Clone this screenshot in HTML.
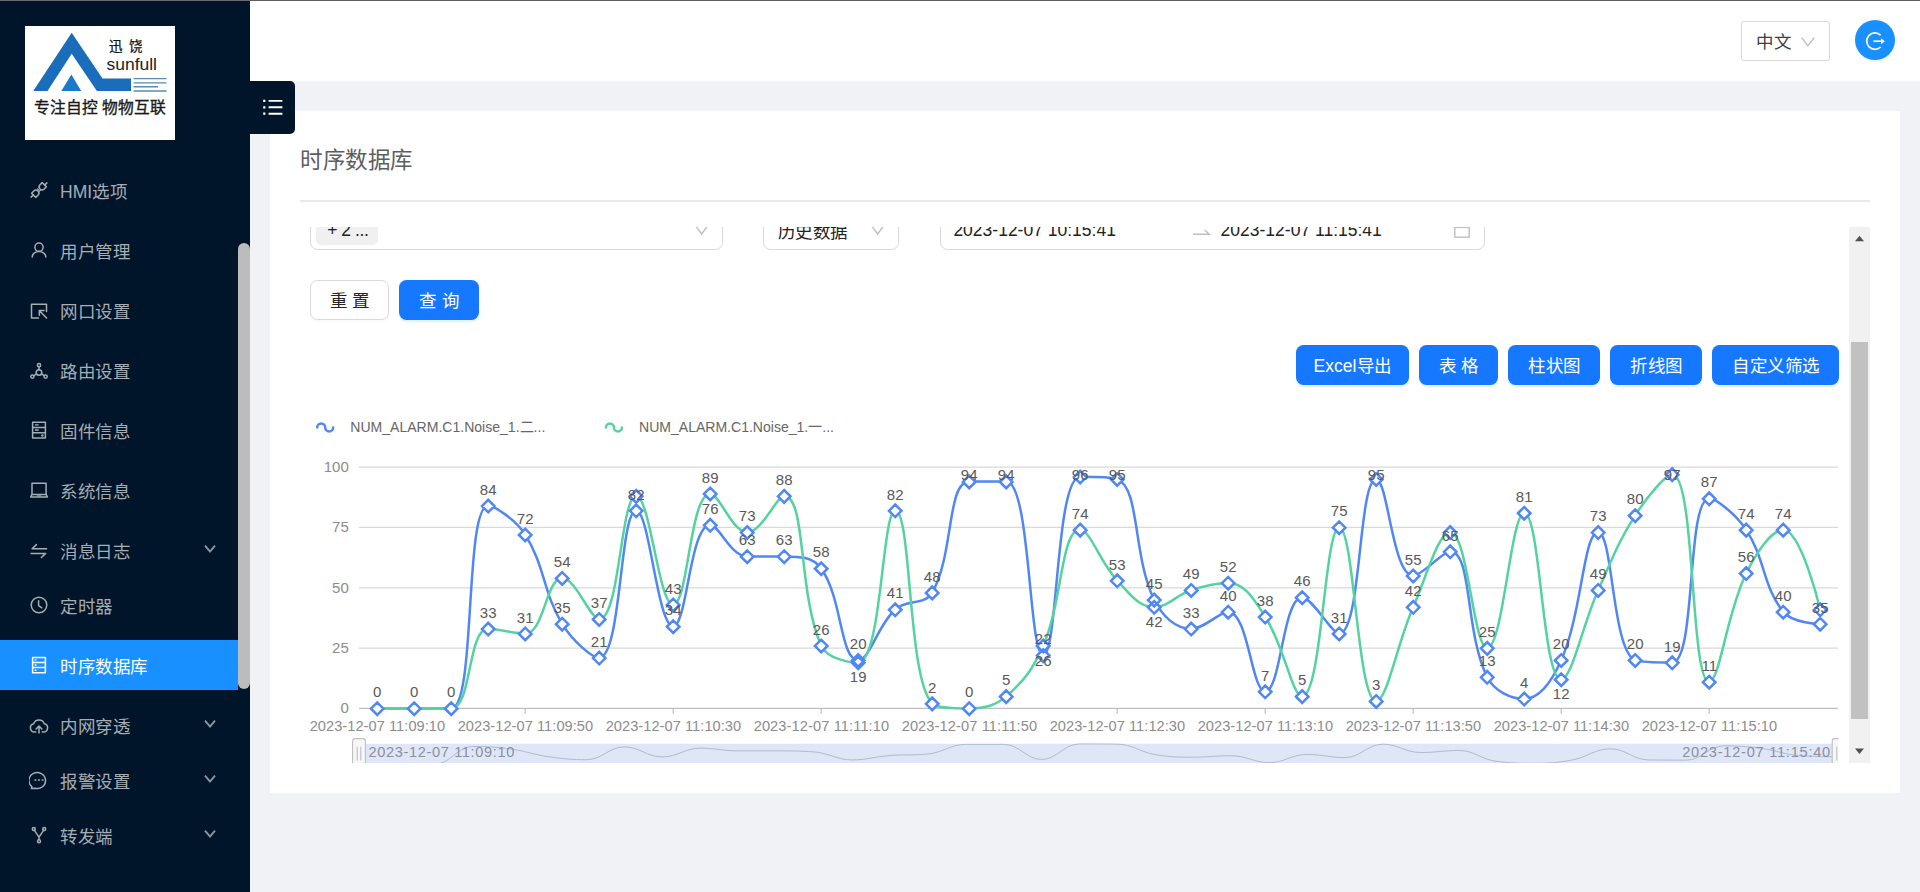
<!DOCTYPE html>
<html lang="zh-CN">
<head>
<meta charset="utf-8">
<title>时序数据库</title>
<style>
*{box-sizing:border-box}
html,body{margin:0;padding:0}
body{width:1920px;height:892px;overflow:hidden;background:#f0f2f5;position:relative;font-family:"Liberation Sans",sans-serif;font-size:17.5px;color:#262626}
svg text{font-family:"Liberation Sans",sans-serif}
.abs{position:absolute}
.c{display:inline-block;width:1em;text-align:center;font-style:normal}
.topline{left:0;top:0;width:1920px;height:1px;background:#5e5e5e;z-index:9}
.sider{left:0;top:0;width:250px;height:892px;background:#001529}
.header{left:250px;top:0;width:1670px;height:81px;background:#fff}
.mi{left:60px;height:50px;line-height:50px;font-size:17.5px;white-space:nowrap}
.sthumb{left:238px;top:243px;width:12px;height:446px;border-radius:6px;background:#bcbcbc}
.toggle{z-index:5;left:250px;top:81px;width:45px;height:52.5px;background:#001529;border-radius:0 5px 5px 0}
.lang{left:1741px;top:21px;width:89px;height:40px;border:1.25px solid #d9d9d9;border-radius:3px;background:#fff}
.lang span{position:absolute;left:14px;top:2px;line-height:37.5px;font-size:17.5px;color:#404040}
.logout{left:1855px;top:20px;width:40px;height:40px;border-radius:50%;background:#1890ff;box-shadow:0 2px 0 rgba(0,0,0,.045)}
.card{left:270px;top:111px;width:1630px;height:682px;background:#fff}
.title{left:300px;top:142.5px;height:36px;line-height:36px;font-size:22.5px;color:#5e5e5e;white-space:nowrap}
.divider{left:300px;top:200px;width:1570px;height:1.5px;background:#e9e9e9}
.scroll{left:300px;top:227px;width:1570px;height:536px;overflow:hidden}
.scroll .in{position:absolute;left:-300px;top:-227px;width:1920px;height:892px}
.chart{position:absolute;left:300px;top:227px}
.box{border:1.25px solid #d9d9d9;border-radius:7.5px;background:#fff}
.btn{height:40px;border-radius:7.5px;line-height:43.5px;text-align:center;font-size:17.5px;white-space:nowrap}
.btn.p{background:#1677ff;color:#fff;box-shadow:0 2.5px 0 rgba(5,145,255,.1)}
.btn.d{background:#fff;border:1.25px solid #d9d9d9;color:#262626;line-height:41px;box-shadow:0 2.5px 0 rgba(0,0,0,.02)}
.track{left:1849px;top:227px;width:21px;height:536px;background:#f1f1f1}
.thumb{left:1851px;top:342px;width:17px;height:377px;background:#c1c1c1}
.dt{font-size:17.5px;color:#222;line-height:20px;white-space:nowrap}
</style>
</head>
<body>
<div class="abs sider"></div>
<div class="abs header"></div>
<div class="abs topline"></div><div class="abs" style="left:0;top:0;width:250px;height:1px;background:#6a6b70;z-index:10"></div>
<svg class="abs" style="left:25px;top:26px" width="150" height="114" viewBox="25 26 150 114">
<rect x="25" y="26" width="150" height="114" fill="#fff"/>
<path d="M71.7 32.8L33.2 91.1H47.5L71.7 53.8L96.9 91.1H131V78.4H102.5Z" fill="#1a6dba"/>
<path d="M71.4 74.4L61.3 91.1H81.2Z" fill="#1a7ac8"/>
<path d="M133.6 78.6H166.5M133.6 82.9H166.5M133.6 86.8H158M133.6 91H166.5" stroke="#5a8ab3" stroke-width="1.4" fill="none"/>
<text x="108.5" y="50.5" font-family="Liberation Serif, serif" font-size="13.5" fill="#111" stroke="#111" stroke-width="0.25" textLength="33.5" lengthAdjust="spacing">迅饶</text>
<text x="106.5" y="70.3" font-size="17.2" fill="#222" textLength="50.5" lengthAdjust="spacingAndGlyphs">sunfull</text>
<text x="34" y="113.2" font-size="15.8" fill="#1a1a1a" stroke="#1a1a1a" stroke-width="0.35" textLength="132" lengthAdjust="spacing">专注自控 物物互联</text>
</svg>
<svg class="abs" style="left:29.0px;top:180.3px" width="20" height="20" viewBox="-10 -10 20 20"><g fill="none" stroke="#a6adb4" stroke-width="1.5" stroke-linecap="round" stroke-linejoin="round"><path d="M7.9 -7.1L5.6 -4.9M-7.9 7.1L-5.6 4.9"/><path d="M1 -5.2l2.2 -2.2l4.2 4.2l-2.2 2.2a3 3 0 0 1 -4.2 0a3 3 0 0 1 0 -4.2z"/><path d="M-1 5.2l-2.2 2.2l-4.2 -4.2l2.2 -2.2a3 3 0 0 1 4.2 0a3 3 0 0 1 0 4.2z"/><path d="M-1.6 -1.2l1.2 1.2M0.4 1.2l1.2 -1.2" stroke-width="1.2"/></g></svg>
<div class="abs mi" style="top:166.9px;color:#a6adb4">HMI<i class="c">选</i><i class="c">项</i></div>
<svg class="abs" style="left:29.0px;top:240.4px" width="20" height="20" viewBox="-10 -10 20 20"><g fill="none" stroke="#a6adb4" stroke-width="1.5" stroke-linecap="round" stroke-linejoin="round"><circle cx="0" cy="-2.8" r="4.1"/><path d="M-6.8 7a6.8 5.4 0 0 1 13.6 0"/></g></svg>
<div class="abs mi" style="top:227.0px;color:#a6adb4"><i class="c">用</i><i class="c">户</i><i class="c">管</i><i class="c">理</i></div>
<svg class="abs" style="left:29.0px;top:300.5px" width="20" height="20" viewBox="-10 -10 20 20"><g fill="none" stroke="#a6adb4" stroke-width="1.5" stroke-linecap="round" stroke-linejoin="round" stroke-linecap="butt" stroke-linejoin="miter"><path d="M7.5 0.5V-6.8H-7.5V7H-0.5"/><path d="M7.6 7L0.5 -0.2M0.3 4.2V-0.4H5"/></g></svg>
<div class="abs mi" style="top:287.1px;color:#a6adb4"><i class="c">网</i><i class="c">口</i><i class="c">设</i><i class="c">置</i></div>
<svg class="abs" style="left:29.0px;top:360.5px" width="20" height="20" viewBox="-10 -10 20 20"><g fill="none" stroke="#a6adb4" stroke-width="1.5" stroke-linecap="round" stroke-linejoin="round" stroke-width="1.3"><circle cx="0" cy="1.5" r="2.8"/><circle cx="0" cy="-5.8" r="1.6"/><circle cx="-6.6" cy="5.6" r="1.6"/><circle cx="6.6" cy="5.6" r="1.6"/><path d="M0 -4.2V-1.3M-2.4 2.9L-5.2 4.7M2.4 2.9L5.2 4.7"/></g></svg>
<div class="abs mi" style="top:347.1px;color:#a6adb4"><i class="c">路</i><i class="c">由</i><i class="c">设</i><i class="c">置</i></div>
<svg class="abs" style="left:29.0px;top:420.4px" width="20" height="20" viewBox="-10 -10 20 20"><g fill="none" stroke="#a6adb4" stroke-width="1.5" stroke-linecap="round" stroke-linejoin="round" stroke-linejoin="miter"><rect x="-6.4" y="-7.8" width="12.8" height="15.8"/><path d="M-6.4 -2.6H6.4M-6.4 2.7H6.4"/><path d="M-3.6 -5.2H-0.8M-3.6 0H-0.8" stroke-width="1.3"/><circle cx="3.4" cy="5.4" r="0.5" fill="#a6adb4"/></g></svg>
<div class="abs mi" style="top:407.0px;color:#a6adb4"><i class="c">固</i><i class="c">件</i><i class="c">信</i><i class="c">息</i></div>
<svg class="abs" style="left:29.0px;top:480.4px" width="20" height="20" viewBox="-10 -10 20 20"><g fill="none" stroke="#a6adb4" stroke-width="1.5" stroke-linecap="round" stroke-linejoin="round" stroke-linejoin="miter"><rect x="-7" y="-6.8" width="14.1" height="11.2"/><path d="M-7 4.4L-8.3 6.9H8.4L7.1 4.4"/><path d="M-1.6 5.9H1.8" stroke-width="1"/></g></svg>
<div class="abs mi" style="top:467.0px;color:#a6adb4"><i class="c">系</i><i class="c">统</i><i class="c">信</i><i class="c">息</i></div>
<svg class="abs" style="left:29.0px;top:540.6px" width="20" height="20" viewBox="-10 -10 20 20"><g fill="none" stroke="#a6adb4" stroke-width="1.5" stroke-linecap="round" stroke-linejoin="round" stroke-linecap="butt" stroke-linejoin="miter"><path d="M7.6 -2.2H-6.9L-2.6 -6.4"/><path d="M-7.9 2.4H6.7L2.4 6.5"/></g></svg>
<div class="abs mi" style="top:527.2px;color:#a6adb4"><i class="c">消</i><i class="c">息</i><i class="c">日</i><i class="c">志</i></div>
<svg class="abs" style="left:202px;top:543.4px" width="16" height="12" viewBox="-8 -6 16 12"><path d="M-5 -3.3L0 2.6L5 -3.3" fill="none" stroke="#8c96a1" stroke-width="1.9"/></svg>
<svg class="abs" style="left:29.0px;top:595.3px" width="20" height="20" viewBox="-10 -10 20 20"><g fill="none" stroke="#a6adb4" stroke-width="1.5" stroke-linecap="round" stroke-linejoin="round"><circle cx="0" cy="0" r="7.8"/><path d="M-0.4 -4.2V0.6L2.8 2.8"/></g></svg>
<div class="abs mi" style="top:581.9px;color:#a6adb4"><i class="c">定</i><i class="c">时</i><i class="c">器</i></div>
<div class="abs" style="left:0;top:640px;width:238px;height:50px;background:#1890ff"></div>
<svg class="abs" style="left:29.0px;top:655.4px" width="20" height="20" viewBox="-10 -10 20 20"><g fill="none" stroke="#ffffff" stroke-width="1.5" stroke-linecap="round" stroke-linejoin="round" stroke-linejoin="miter"><rect x="-6.4" y="-7.6" width="12.8" height="15.4"/><path d="M-6.4 -2.5H6.4M-6.4 2.6H6.4"/><path d="M-3.8 -5.1h0.8M-3.8 0h0.8M-3.8 5.2h0.8" stroke-width="1.4"/></g></svg>
<div class="abs mi" style="top:642.0px;color:#ffffff"><i class="c">时</i><i class="c">序</i><i class="c">数</i><i class="c">据</i><i class="c">库</i></div>
<svg class="abs" style="left:29.0px;top:715.6px" width="20" height="20" viewBox="-10 -10 20 20"><g fill="none" stroke="#a6adb4" stroke-width="1.5" stroke-linecap="round" stroke-linejoin="round"><path d="M-3.2 6H-4.4a4.2 4.2 0 0 1 -0.9 -8.3a5.6 5.6 0 0 1 10.6 0a4.2 4.2 0 0 1 -0.9 8.3H3.2"/><path d="M0 7V0.4M-2.9 3L0 0.1L2.9 3"/></g></svg>
<div class="abs mi" style="top:702.2px;color:#a6adb4"><i class="c">内</i><i class="c">网</i><i class="c">穿</i><i class="c">透</i></div>
<svg class="abs" style="left:202px;top:718.4px" width="16" height="12" viewBox="-8 -6 16 12"><path d="M-5 -3.3L0 2.6L5 -3.3" fill="none" stroke="#8c96a1" stroke-width="1.9"/></svg>
<svg class="abs" style="left:29.0px;top:770.4px" width="20" height="20" viewBox="-10 -10 20 20"><g fill="none" stroke="#a6adb4" stroke-width="1.5" stroke-linecap="round" stroke-linejoin="round"><path d="M-7.2 6.6a8.3 8 0 1 1 3 1.6l-3.4 0.4z"/><path d="M-3.9 0h0.6M-0.3 0h0.6M3.3 0h0.6" stroke-width="1.7"/></g></svg>
<div class="abs mi" style="top:757.0px;color:#a6adb4"><i class="c">报</i><i class="c">警</i><i class="c">设</i><i class="c">置</i></div>
<svg class="abs" style="left:202px;top:773.2px" width="16" height="12" viewBox="-8 -6 16 12"><path d="M-5 -3.3L0 2.6L5 -3.3" fill="none" stroke="#8c96a1" stroke-width="1.9"/></svg>
<svg class="abs" style="left:29.0px;top:825.4px" width="20" height="20" viewBox="-10 -10 20 20"><g fill="none" stroke="#a6adb4" stroke-width="1.5" stroke-linecap="round" stroke-linejoin="round" stroke-width="1.4"><circle cx="-5.2" cy="-6" r="1.5"/><circle cx="5.2" cy="-6" r="1.5"/><circle cx="0" cy="6.2" r="1.5"/><path d="M-4.6 -4.6L0 2.2L4.6 -4.6M0 2.2V4.6"/></g></svg>
<div class="abs mi" style="top:812.0px;color:#a6adb4"><i class="c">转</i><i class="c">发</i><i class="c">端</i></div>
<svg class="abs" style="left:202px;top:828.2px" width="16" height="12" viewBox="-8 -6 16 12"><path d="M-5 -3.3L0 2.6L5 -3.3" fill="none" stroke="#8c96a1" stroke-width="1.9"/></svg>
<div class="abs sthumb"></div>

<div class="abs lang"><span><i class="c">中</i><i class="c">文</i></span>
<svg class="abs" style="left:57px;top:13px" width="18" height="14" viewBox="0 0 18 14"><path d="M2.6 2.6L8.9 10.6L15.2 2.6" fill="none" stroke="#bfbfbf" stroke-width="1.4"/></svg></div>
<div class="abs logout"><svg width="40" height="40" viewBox="-20 -21.1 40 40"><path d="M5.6 -5.9A8.2 8.2 0 1 0 5.6 5.9" fill="none" stroke="#fff" stroke-width="1.7"/><path d="M-1.6 0.1H7" stroke="#fff" stroke-width="1.7" fill="none"/><path d="M6 -2.9L9.8 0.1L6 3.1Z" fill="#fff"/></svg></div>

<div class="abs toggle"><svg width="45" height="52" viewBox="250 81 45 52"><path d="M268.6 100.9H282.4M268.6 107.3H282.4M268.6 113.7H282.4" stroke="#fff" stroke-width="1.9" fill="none"/><path d="M263.2 100.9h2.2M263.2 107.3h2.2M263.2 113.7h2.2" stroke="#fff" stroke-width="2.2" fill="none"/></svg></div>

<div class="abs card"></div>
<div class="abs title"><i class="c">时</i><i class="c">序</i><i class="c">数</i><i class="c">据</i><i class="c">库</i></div>
<div class="abs divider"></div>

<div class="abs scroll"><div class="in">
  <div class="abs box" style="left:310px;top:210px;width:413px;height:40px"></div>
  <div class="abs" style="left:316px;top:215px;width:62px;height:30px;border-radius:5px;background:#f0f0f0"></div>
  <div class="abs dt" style="left:327.2px;top:220px;letter-spacing:-0.45px">+ 2 ...</div>
  <svg class="abs" style="left:693px;top:222px" width="18" height="14" viewBox="0 0 18 14"><path d="M2.8 4.2L8.6 12L14.4 4.2" fill="none" stroke="#bfbfbf" stroke-width="1.4"/></svg>

  <div class="abs box" style="left:763px;top:210px;width:136px;height:40px"></div>
  <div class="abs dt" style="left:777.4px;top:221.8px"><i class="c">历</i><i class="c">史</i><i class="c">数</i><i class="c">据</i></div>
  <svg class="abs" style="left:869px;top:222px" width="18" height="14" viewBox="0 0 18 14"><path d="M2.8 4.2L8.6 12L14.4 4.2" fill="none" stroke="#bfbfbf" stroke-width="1.4"/></svg>

  <div class="abs box" style="left:940px;top:210px;width:545px;height:40px"></div>
  <div class="abs dt" style="left:953.4px;top:219.5px">2023-12-07 10:15:41</div>
  <div class="abs dt" style="left:1220.6px;top:219.5px">2023-12-07 11:15:41</div>
  <svg class="abs" style="left:1190px;top:222px" width="24" height="16" viewBox="0 0 24 16"><path d="M3 12.2H19.4L14.6 8" fill="none" stroke="#bfbfbf" stroke-width="1.4"/></svg>
  <svg class="abs" style="left:1452px;top:218px" width="20" height="22" viewBox="0 0 20 22"><rect x="2.8" y="4" width="14.4" height="15.2" fill="none" stroke="#bfbfbf" stroke-width="1.4"/><path d="M2.8 9.4H17.2" stroke="#bfbfbf" stroke-width="1.3"/></svg>

  <div class="abs btn d" style="left:310px;top:280px;width:79px"><i class="c">重</i> <i class="c">置</i></div>
  <div class="abs btn p" style="left:399px;top:280px;width:80px"><i class="c">查</i> <i class="c">询</i></div>

  <div class="abs btn p" style="left:1296px;top:345px;width:113px">Excel<i class="c">导</i><i class="c">出</i></div>
  <div class="abs btn p" style="left:1419px;top:345px;width:79px"><i class="c">表</i> <i class="c">格</i></div>
  <div class="abs btn p" style="left:1508px;top:345px;width:92px"><i class="c">柱</i><i class="c">状</i><i class="c">图</i></div>
  <div class="abs btn p" style="left:1610px;top:345px;width:92px"><i class="c">折</i><i class="c">线</i><i class="c">图</i></div>
  <div class="abs btn p" style="left:1712px;top:345px;width:127px"><i class="c">自</i><i class="c">定</i><i class="c">义</i><i class="c">筛</i><i class="c">选</i></div>
<svg class="chart" width="1551" height="536" viewBox="300 227 1551 536">
<line x1="359.0" x2="1838.0" y1="467.10" y2="467.10" stroke="#d9d9d9" stroke-width="1.25"/>
<line x1="359.0" x2="1838.0" y1="527.42" y2="527.42" stroke="#d9d9d9" stroke-width="1.25"/>
<line x1="359.0" x2="1838.0" y1="587.75" y2="587.75" stroke="#d9d9d9" stroke-width="1.25"/>
<line x1="359.0" x2="1838.0" y1="648.07" y2="648.07" stroke="#d9d9d9" stroke-width="1.25"/>
<line x1="359.0" x2="1838.0" y1="708.40" y2="708.40" stroke="#bfbfbf" stroke-width="1.25"/>
<line x1="377.20" x2="377.20" y1="708.40" y2="713.80" stroke="#bfbfbf" stroke-width="1.25"/>
<line x1="525.20" x2="525.20" y1="708.40" y2="713.80" stroke="#bfbfbf" stroke-width="1.25"/>
<line x1="673.20" x2="673.20" y1="708.40" y2="713.80" stroke="#bfbfbf" stroke-width="1.25"/>
<line x1="821.20" x2="821.20" y1="708.40" y2="713.80" stroke="#bfbfbf" stroke-width="1.25"/>
<line x1="969.20" x2="969.20" y1="708.40" y2="713.80" stroke="#bfbfbf" stroke-width="1.25"/>
<line x1="1117.20" x2="1117.20" y1="708.40" y2="713.80" stroke="#bfbfbf" stroke-width="1.25"/>
<line x1="1265.20" x2="1265.20" y1="708.40" y2="713.80" stroke="#bfbfbf" stroke-width="1.25"/>
<line x1="1413.20" x2="1413.20" y1="708.40" y2="713.80" stroke="#bfbfbf" stroke-width="1.25"/>
<line x1="1561.20" x2="1561.20" y1="708.40" y2="713.80" stroke="#bfbfbf" stroke-width="1.25"/>
<line x1="1709.20" x2="1709.20" y1="708.40" y2="713.80" stroke="#bfbfbf" stroke-width="1.25"/>
<g font-size="15" fill="#8c8c8c" text-anchor="end">
<text x="348.8" y="472.10">100</text>
<text x="348.8" y="532.42">75</text>
<text x="348.8" y="592.75">50</text>
<text x="348.8" y="653.07">25</text>
<text x="348.8" y="713.40">0</text>
</g>
<g font-size="14.6" fill="#8c8c8c" text-anchor="middle">
<text x="377.40" y="730.6" textLength="135.5" lengthAdjust="spacing">2023-12-07 11:09:10</text>
<text x="525.40" y="730.6" textLength="135.5" lengthAdjust="spacing">2023-12-07 11:09:50</text>
<text x="673.40" y="730.6" textLength="135.5" lengthAdjust="spacing">2023-12-07 11:10:30</text>
<text x="821.40" y="730.6" textLength="135.5" lengthAdjust="spacing">2023-12-07 11:11:10</text>
<text x="969.40" y="730.6" textLength="135.5" lengthAdjust="spacing">2023-12-07 11:11:50</text>
<text x="1117.40" y="730.6" textLength="135.5" lengthAdjust="spacing">2023-12-07 11:12:30</text>
<text x="1265.40" y="730.6" textLength="135.5" lengthAdjust="spacing">2023-12-07 11:13:10</text>
<text x="1413.40" y="730.6" textLength="135.5" lengthAdjust="spacing">2023-12-07 11:13:50</text>
<text x="1561.40" y="730.6" textLength="135.5" lengthAdjust="spacing">2023-12-07 11:14:30</text>
<text x="1709.40" y="730.6" textLength="135.5" lengthAdjust="spacing">2023-12-07 11:15:10</text>
</g>
<path d="M377.20 708.40C377.20 708.40 399.40 708.40 414.20 708.40C429.00 708.40 446.69 708.40 451.20 708.40C476.29 708.40 464.10 505.71 488.20 505.71C493.70 505.71 515.52 519.19 525.20 534.66C545.12 566.49 542.71 591.53 562.20 623.94C572.31 640.75 591.85 657.73 599.20 657.73C621.45 657.73 619.77 510.53 636.20 510.53C649.37 510.53 657.52 626.36 673.20 626.36C687.12 626.36 689.78 525.01 710.20 525.01C719.38 525.01 730.41 556.38 747.20 556.38C760.01 556.38 769.77 556.38 784.20 556.38C799.37 556.38 812.84 556.72 821.20 568.45C842.44 598.23 840.09 660.14 858.20 660.14C869.69 660.14 877.24 625.86 895.20 609.47C906.84 598.84 924.56 605.77 932.20 592.58C954.16 554.62 946.71 481.58 969.20 481.58C976.31 481.58 1001.10 481.58 1006.20 481.58C1030.70 481.58 1028.59 655.31 1043.20 655.31C1058.19 655.31 1055.60 476.75 1080.20 476.75C1085.20 476.75 1110.48 476.75 1117.20 479.16C1140.08 487.38 1132.63 556.21 1154.20 599.81C1162.23 616.05 1175.33 628.77 1191.20 628.77C1204.93 628.77 1218.83 611.88 1228.20 611.88C1248.43 611.88 1251.44 691.51 1265.20 691.51C1281.04 691.51 1282.62 597.40 1302.20 597.40C1312.22 597.40 1331.92 633.60 1339.20 633.60C1361.52 633.60 1358.27 479.16 1376.20 479.16C1387.87 479.16 1392.46 575.68 1413.20 575.68C1422.06 575.68 1442.73 551.55 1450.20 551.55C1472.33 551.55 1464.91 632.69 1487.20 677.03C1494.51 691.57 1511.02 698.75 1524.20 698.75C1540.62 698.75 1552.72 679.22 1561.20 660.14C1582.32 612.63 1583.40 532.25 1598.20 532.25C1613.00 532.25 1612.05 651.48 1635.20 660.14C1641.65 662.55 1666.85 662.55 1672.20 662.55C1696.45 662.55 1686.23 498.47 1709.20 498.47C1715.83 498.47 1735.83 513.95 1746.20 529.84C1765.43 559.31 1762.54 585.60 1783.20 611.88C1792.14 623.24 1820.20 623.94 1820.20 623.94" fill="none" stroke="#5187f5" stroke-width="2.5" stroke-linejoin="round"/>
<path d="M377.20 708.40C377.20 708.40 399.40 708.40 414.20 708.40C429.00 708.40 442.42 708.40 451.20 708.40C472.02 708.40 467.43 628.77 488.20 628.77C497.03 628.77 514.58 633.60 525.20 633.60C544.18 633.60 546.01 578.10 562.20 578.10C575.61 578.10 590.30 619.12 599.20 619.12C619.90 619.12 620.56 496.06 636.20 496.06C650.16 496.06 658.55 604.64 673.20 604.64C688.15 604.64 689.88 493.64 710.20 493.64C719.48 493.64 732.16 532.25 747.20 532.25C761.76 532.25 776.76 496.06 784.20 496.06C806.36 496.06 797.78 592.97 821.20 645.66C827.38 659.57 852.09 662.55 858.20 662.55C881.69 662.55 882.08 510.53 895.20 510.53C911.68 510.53 907.32 678.15 932.20 703.57C936.92 708.40 954.71 708.40 969.20 708.40C984.31 708.40 994.87 705.94 1006.20 696.33C1024.47 680.85 1033.12 668.33 1043.20 645.66C1062.72 601.73 1060.68 529.84 1080.20 529.84C1090.28 529.84 1100.05 562.61 1117.20 580.51C1129.65 593.50 1138.57 607.05 1154.20 607.05C1168.17 607.05 1175.84 595.17 1191.20 590.16C1205.44 585.52 1215.49 582.92 1228.20 582.92C1245.09 582.92 1254.45 600.22 1265.20 616.71C1284.05 645.59 1292.23 696.33 1302.20 696.33C1321.83 696.33 1324.60 527.42 1339.20 527.42C1354.20 527.42 1357.34 701.16 1376.20 701.16C1386.94 701.16 1396.98 644.07 1413.20 607.05C1426.58 576.51 1438.15 532.25 1450.20 532.25C1467.75 532.25 1473.45 648.07 1487.20 648.07C1503.05 648.07 1510.85 512.95 1524.20 512.95C1540.45 512.95 1542.31 679.44 1561.20 679.44C1571.91 679.44 1582.32 625.38 1598.20 590.16C1611.92 559.75 1617.39 543.24 1635.20 515.36C1646.99 496.91 1666.05 474.34 1672.20 474.34C1695.65 474.34 1690.03 681.86 1709.20 681.86C1719.63 681.86 1726.43 613.88 1746.20 573.27C1756.03 553.07 1771.54 529.84 1783.20 529.84C1801.14 529.84 1820.20 609.47 1820.20 609.47" fill="none" stroke="#54d3a0" stroke-width="2.5" stroke-linejoin="round"/>
<path d="M370.95 708.70 L377.20 702.45 L383.45 708.70 L377.20 714.95ZM407.95 708.70 L414.20 702.45 L420.45 708.70 L414.20 714.95ZM444.95 708.70 L451.20 702.45 L457.45 708.70 L451.20 714.95ZM481.95 629.07 L488.20 622.82 L494.45 629.07 L488.20 635.32ZM518.95 633.90 L525.20 627.65 L531.45 633.90 L525.20 640.15ZM555.95 578.40 L562.20 572.15 L568.45 578.40 L562.20 584.65ZM592.95 619.42 L599.20 613.17 L605.45 619.42 L599.20 625.67ZM629.95 496.36 L636.20 490.11 L642.45 496.36 L636.20 502.61ZM666.95 604.94 L673.20 598.69 L679.45 604.94 L673.20 611.19ZM703.95 493.94 L710.20 487.69 L716.45 493.94 L710.20 500.19ZM740.95 532.55 L747.20 526.30 L753.45 532.55 L747.20 538.80ZM777.95 496.36 L784.20 490.11 L790.45 496.36 L784.20 502.61ZM814.95 645.96 L821.20 639.71 L827.45 645.96 L821.20 652.21ZM851.95 662.85 L858.20 656.60 L864.45 662.85 L858.20 669.10ZM888.95 510.83 L895.20 504.58 L901.45 510.83 L895.20 517.08ZM925.95 703.87 L932.20 697.62 L938.45 703.87 L932.20 710.12ZM962.95 708.70 L969.20 702.45 L975.45 708.70 L969.20 714.95ZM999.95 696.63 L1006.20 690.38 L1012.45 696.63 L1006.20 702.88ZM1036.95 645.96 L1043.20 639.71 L1049.45 645.96 L1043.20 652.21ZM1073.95 530.14 L1080.20 523.89 L1086.45 530.14 L1080.20 536.39ZM1110.95 580.81 L1117.20 574.56 L1123.45 580.81 L1117.20 587.06ZM1147.95 607.35 L1154.20 601.10 L1160.45 607.35 L1154.20 613.60ZM1184.95 590.46 L1191.20 584.21 L1197.45 590.46 L1191.20 596.71ZM1221.95 583.22 L1228.20 576.97 L1234.45 583.22 L1228.20 589.47ZM1258.95 617.01 L1265.20 610.76 L1271.45 617.01 L1265.20 623.26ZM1295.95 696.63 L1302.20 690.38 L1308.45 696.63 L1302.20 702.88ZM1332.95 527.72 L1339.20 521.47 L1345.45 527.72 L1339.20 533.97ZM1369.95 701.46 L1376.20 695.21 L1382.45 701.46 L1376.20 707.71ZM1406.95 607.35 L1413.20 601.10 L1419.45 607.35 L1413.20 613.60ZM1443.95 532.55 L1450.20 526.30 L1456.45 532.55 L1450.20 538.80ZM1480.95 648.37 L1487.20 642.12 L1493.45 648.37 L1487.20 654.62ZM1517.95 513.25 L1524.20 507.00 L1530.45 513.25 L1524.20 519.50ZM1554.95 679.74 L1561.20 673.49 L1567.45 679.74 L1561.20 685.99ZM1591.95 590.46 L1598.20 584.21 L1604.45 590.46 L1598.20 596.71ZM1628.95 515.66 L1635.20 509.41 L1641.45 515.66 L1635.20 521.91ZM1665.95 474.64 L1672.20 468.39 L1678.45 474.64 L1672.20 480.89ZM1702.95 682.16 L1709.20 675.91 L1715.45 682.16 L1709.20 688.41ZM1739.95 573.57 L1746.20 567.32 L1752.45 573.57 L1746.20 579.82ZM1776.95 530.14 L1783.20 523.89 L1789.45 530.14 L1783.20 536.39ZM1813.95 609.77 L1820.20 603.52 L1826.45 609.77 L1820.20 616.02ZM370.95 708.70 L377.20 702.45 L383.45 708.70 L377.20 714.95ZM407.95 708.70 L414.20 702.45 L420.45 708.70 L414.20 714.95ZM444.95 708.70 L451.20 702.45 L457.45 708.70 L451.20 714.95ZM481.95 506.01 L488.20 499.76 L494.45 506.01 L488.20 512.26ZM518.95 534.96 L525.20 528.71 L531.45 534.96 L525.20 541.21ZM555.95 624.24 L562.20 617.99 L568.45 624.24 L562.20 630.49ZM592.95 658.03 L599.20 651.78 L605.45 658.03 L599.20 664.28ZM629.95 510.83 L636.20 504.58 L642.45 510.83 L636.20 517.08ZM666.95 626.66 L673.20 620.41 L679.45 626.66 L673.20 632.91ZM703.95 525.31 L710.20 519.06 L716.45 525.31 L710.20 531.56ZM740.95 556.68 L747.20 550.43 L753.45 556.68 L747.20 562.93ZM777.95 556.68 L784.20 550.43 L790.45 556.68 L784.20 562.93ZM814.95 568.75 L821.20 562.50 L827.45 568.75 L821.20 575.00ZM851.95 660.44 L858.20 654.19 L864.45 660.44 L858.20 666.69ZM888.95 609.77 L895.20 603.52 L901.45 609.77 L895.20 616.02ZM925.95 592.88 L932.20 586.63 L938.45 592.88 L932.20 599.13ZM962.95 481.88 L969.20 475.63 L975.45 481.88 L969.20 488.13ZM999.95 481.88 L1006.20 475.63 L1012.45 481.88 L1006.20 488.13ZM1036.95 655.61 L1043.20 649.36 L1049.45 655.61 L1043.20 661.86ZM1073.95 477.05 L1080.20 470.80 L1086.45 477.05 L1080.20 483.30ZM1110.95 479.46 L1117.20 473.21 L1123.45 479.46 L1117.20 485.71ZM1147.95 600.11 L1154.20 593.86 L1160.45 600.11 L1154.20 606.36ZM1184.95 629.07 L1191.20 622.82 L1197.45 629.07 L1191.20 635.32ZM1221.95 612.18 L1228.20 605.93 L1234.45 612.18 L1228.20 618.43ZM1258.95 691.81 L1265.20 685.56 L1271.45 691.81 L1265.20 698.06ZM1295.95 597.70 L1302.20 591.45 L1308.45 597.70 L1302.20 603.95ZM1332.95 633.90 L1339.20 627.65 L1345.45 633.90 L1339.20 640.15ZM1369.95 479.46 L1376.20 473.21 L1382.45 479.46 L1376.20 485.71ZM1406.95 575.98 L1413.20 569.73 L1419.45 575.98 L1413.20 582.23ZM1443.95 551.85 L1450.20 545.60 L1456.45 551.85 L1450.20 558.10ZM1480.95 677.33 L1487.20 671.08 L1493.45 677.33 L1487.20 683.58ZM1517.95 699.05 L1524.20 692.80 L1530.45 699.05 L1524.20 705.30ZM1554.95 660.44 L1561.20 654.19 L1567.45 660.44 L1561.20 666.69ZM1591.95 532.55 L1598.20 526.30 L1604.45 532.55 L1598.20 538.80ZM1628.95 660.44 L1635.20 654.19 L1641.45 660.44 L1635.20 666.69ZM1665.95 662.85 L1672.20 656.60 L1678.45 662.85 L1672.20 669.10ZM1702.95 498.77 L1709.20 492.52 L1715.45 498.77 L1709.20 505.02ZM1739.95 530.14 L1746.20 523.89 L1752.45 530.14 L1746.20 536.39ZM1776.95 612.18 L1783.20 605.93 L1789.45 612.18 L1783.20 618.43ZM1813.95 624.24 L1820.20 617.99 L1826.45 624.24 L1820.20 630.49Z" fill="#fff" stroke="#5187f5" stroke-width="2.5"/>
<g font-size="15" fill="#595959" text-anchor="middle">
<text x="377.20" y="697.40">0</text>
<text x="414.20" y="697.40">0</text>
<text x="451.20" y="697.40">0</text>
<text x="488.20" y="494.71">84</text>
<text x="488.20" y="617.77">33</text>
<text x="525.20" y="523.66">72</text>
<text x="525.20" y="622.60">31</text>
<text x="562.20" y="612.94">35</text>
<text x="562.20" y="567.10">54</text>
<text x="599.20" y="646.73">21</text>
<text x="599.20" y="608.12">37</text>
<text x="636.20" y="499.53">82</text>
<text x="673.20" y="615.36">34</text>
<text x="673.20" y="593.64">43</text>
<text x="710.20" y="514.01">76</text>
<text x="710.20" y="482.64">89</text>
<text x="747.20" y="545.38">63</text>
<text x="747.20" y="521.25">73</text>
<text x="784.20" y="545.38">63</text>
<text x="784.20" y="485.06">88</text>
<text x="821.20" y="557.45">58</text>
<text x="821.20" y="634.66">26</text>
<text x="858.20" y="649.14">20</text>
<text x="858.20" y="682.45">19</text>
<text x="895.20" y="598.47">41</text>
<text x="895.20" y="499.53">82</text>
<text x="932.20" y="581.58">48</text>
<text x="932.20" y="692.57">2</text>
<text x="969.20" y="479.60">94</text>
<text x="969.20" y="697.40">0</text>
<text x="1006.20" y="479.60">94</text>
<text x="1006.20" y="685.33">5</text>
<text x="1043.20" y="644.31">22</text>
<text x="1043.20" y="665.56">26</text>
<text x="1080.20" y="479.60">96</text>
<text x="1080.20" y="518.84">74</text>
<text x="1117.20" y="479.60">95</text>
<text x="1117.20" y="569.51">53</text>
<text x="1154.20" y="588.81">45</text>
<text x="1154.20" y="626.95">42</text>
<text x="1191.20" y="617.77">33</text>
<text x="1191.20" y="579.16">49</text>
<text x="1228.20" y="600.88">40</text>
<text x="1228.20" y="571.92">52</text>
<text x="1265.20" y="680.51">7</text>
<text x="1265.20" y="605.71">38</text>
<text x="1302.20" y="586.40">46</text>
<text x="1302.20" y="685.33">5</text>
<text x="1339.20" y="622.60">31</text>
<text x="1339.20" y="516.42">75</text>
<text x="1376.20" y="479.60">95</text>
<text x="1376.20" y="690.16">3</text>
<text x="1413.20" y="564.68">55</text>
<text x="1413.20" y="596.05">42</text>
<text x="1450.20" y="540.55">65</text>
<text x="1487.20" y="666.03">13</text>
<text x="1487.20" y="637.07">25</text>
<text x="1524.20" y="687.75">4</text>
<text x="1524.20" y="501.95">81</text>
<text x="1561.20" y="649.14">20</text>
<text x="1561.20" y="699.34">12</text>
<text x="1598.20" y="521.25">73</text>
<text x="1598.20" y="579.16">49</text>
<text x="1635.20" y="649.14">20</text>
<text x="1635.20" y="504.36">80</text>
<text x="1672.20" y="651.55">19</text>
<text x="1672.20" y="479.60">97</text>
<text x="1709.20" y="487.47">87</text>
<text x="1709.20" y="670.86">11</text>
<text x="1746.20" y="518.84">74</text>
<text x="1746.20" y="562.27">56</text>
<text x="1783.20" y="600.88">40</text>
<text x="1783.20" y="518.84">74</text>
<text x="1820.20" y="612.94">35</text>
</g>
<path d="M317.2 427.4 a4 4 0 0 1 8 0 a4 4 0 0 0 8 0" fill="none" stroke="#5187f5" stroke-width="2.5" stroke-linecap="round"/>
<path d="M605.9 427.4 a4 4 0 0 1 8 0 a4 4 0 0 0 8 0" fill="none" stroke="#54d3a0" stroke-width="2.5" stroke-linecap="round"/>
<g font-size="15" fill="#666">
<text x="350.3" y="432.1" textLength="195" lengthAdjust="spacingAndGlyphs">NUM_ALARM.C1.Noise_1.二...</text>
<text x="639" y="432.1" textLength="195" lengthAdjust="spacingAndGlyphs">NUM_ALARM.C1.Noise_1.一...</text>
</g>
<rect x="359.0" y="743.75" width="1479.0" height="22" fill="#dfe6f8"/>
<path d="M359.00 764.10C359.00 764.10 381.75 764.10 396.92 764.10C412.09 764.10 420.42 764.10 434.85 764.10C450.76 764.10 456.88 746.48 472.77 746.48C487.21 746.48 495.66 746.96 510.69 748.99C526.00 751.07 533.31 754.60 548.62 756.76C563.65 758.88 571.76 759.69 586.54 759.69C602.09 759.69 609.14 746.90 624.46 746.90C639.48 746.90 647.16 756.97 662.38 756.97C677.49 756.97 684.96 748.16 700.31 748.16C715.30 748.16 723.04 750.88 738.23 750.88C753.38 750.88 760.99 750.88 776.15 750.88C791.33 750.88 799.07 750.88 814.08 751.93C829.41 753.00 836.72 759.90 852.00 759.90C867.06 759.90 874.71 756.68 889.92 755.50C905.05 754.33 912.91 755.50 927.85 754.03C943.25 752.52 950.36 744.38 965.77 744.38C980.70 744.38 989.08 744.38 1003.69 744.38C1019.42 744.38 1026.48 759.48 1041.62 759.48C1056.81 759.48 1063.78 743.96 1079.54 743.96C1094.12 743.96 1102.57 743.96 1117.46 744.17C1132.91 744.39 1139.95 752.05 1155.38 754.66C1170.29 757.18 1178.13 757.18 1193.31 757.18C1208.47 757.18 1216.18 755.71 1231.23 755.71C1246.52 755.71 1254.03 762.63 1269.15 762.63C1284.37 762.63 1291.76 754.45 1307.08 754.45C1322.10 754.45 1330.25 757.60 1345.00 757.60C1360.59 757.60 1367.49 744.17 1382.92 744.17C1397.83 744.17 1405.51 752.56 1420.85 752.56C1435.85 752.56 1443.89 750.46 1458.77 750.46C1474.23 750.46 1481.23 759.41 1496.69 761.37C1511.57 763.26 1519.47 763.26 1534.62 763.26C1549.80 763.26 1557.65 762.75 1572.54 759.90C1587.99 756.95 1595.29 748.79 1610.46 748.79C1625.63 748.79 1632.90 759.69 1648.38 759.90C1663.24 760.11 1671.64 760.11 1686.31 760.11C1701.98 760.11 1708.58 745.85 1724.23 745.85C1738.92 745.85 1747.10 746.62 1762.15 748.58C1777.44 750.56 1784.78 754.64 1800.08 755.71C1815.12 756.76 1838.00 756.76 1838.00 756.76" fill="none" stroke="#afbbcf" stroke-width="1"/>
<g font-size="14.6" fill="#8b909c">
<text x="368.4" y="756.5" textLength="146" lengthAdjust="spacing">2023-12-07 11:09:10</text>
<text x="1682.2" y="756.5" textLength="148" lengthAdjust="spacing">2023-12-07 11:15:40</text>
</g>
<rect x="352.6" y="738.6" width="12.8" height="30" rx="2.6" fill="#f7f7f7" stroke="#bfbfbf" stroke-width="1.1"/>
<path d="M357.2 746.5v14M360.8 746.5v14" stroke="#bfbfbf" stroke-width="1.1"/>
<rect x="1832.2" y="738.6" width="12.8" height="30" rx="2.6" fill="#f7f7f7" stroke="#bfbfbf" stroke-width="1.1"/>
<path d="M1836.8 746.5v14M1840.4 746.5v14" stroke="#bfbfbf" stroke-width="1.1"/>
<rect x="1838.6" y="730" width="12" height="40" fill="#fff"/>
</svg>
  <div class="abs track"></div>
  <div class="abs thumb"></div>
  <svg class="abs" style="left:1849px;top:227px" width="21" height="536" viewBox="1849 227 21 536"><path d="M1855 241.2L1859.5 235.8L1864 241.2Z" fill="#505050"/><path d="M1855 748.6L1859.5 754L1864 748.6Z" fill="#505050"/></svg>
</div></div>
</body>
</html>
